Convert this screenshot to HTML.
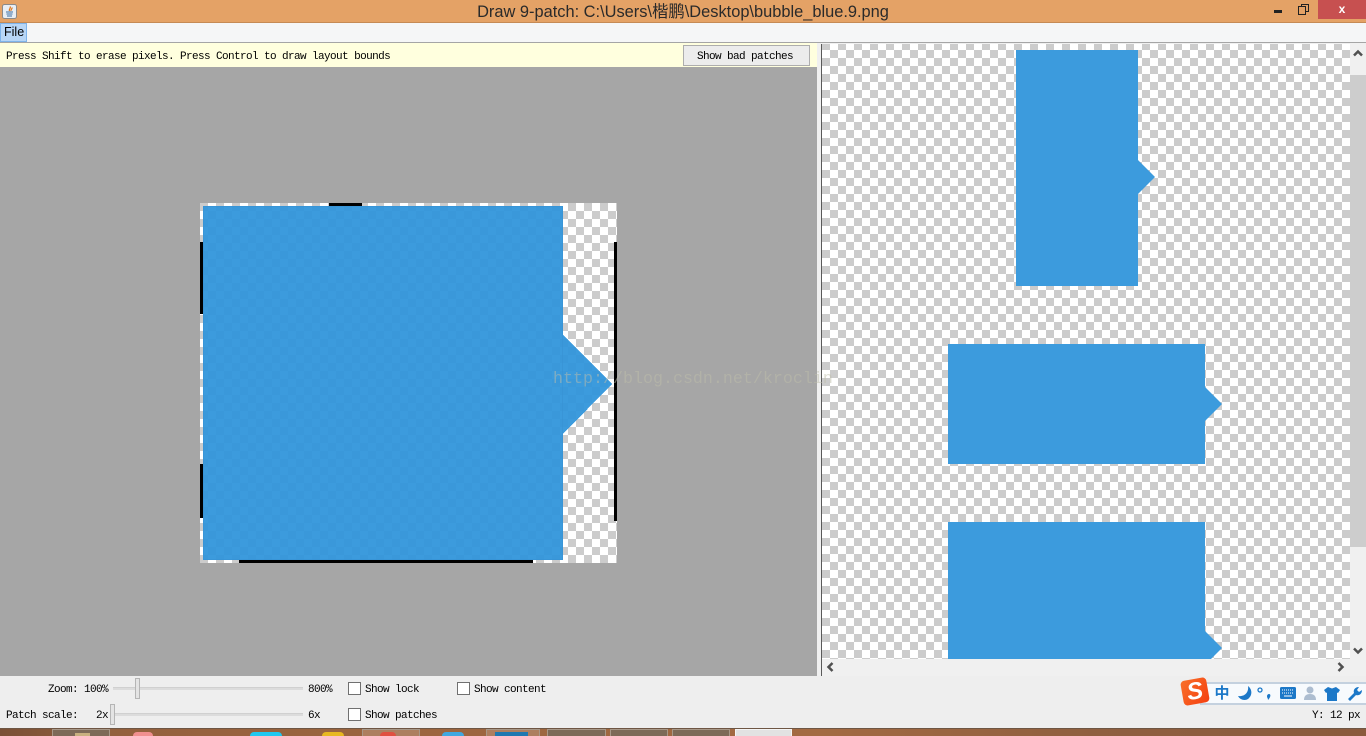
<!DOCTYPE html>
<html><head><meta charset="utf-8"><title>Draw 9-patch</title>
<style>
html,body{margin:0;padding:0;width:1366px;height:736px;overflow:hidden;background:#eee}
.a{position:absolute}
.m{position:absolute;font-family:"Liberation Mono",monospace;font-size:11px;letter-spacing:-.6px;color:#000;line-height:14px;white-space:pre}
.ch{position:absolute;width:11px;height:11px;background:#fff;border:1px solid #707070}
.track{position:absolute;left:113px;width:190px;height:3px;background:#dcdcdc;border-top:1px solid #d0d0d0;box-sizing:border-box}
.thumb{position:absolute;width:5px;height:21px;background:#e4e4e4;border:1px solid #b5b5b5;box-sizing:border-box}
.cb{background-color:#fff;background-image:conic-gradient(#fff 25%,#ccc 0 50%,#fff 0 75%,#ccc 0);background-size:16px 16px}
.tb{position:absolute;top:729px;height:7px;background:#7d6a58;border:1px solid #a89888;border-bottom:0;box-sizing:border-box}
</style></head>
<body>
<!-- title bar -->
<div class="a" style="left:0;top:0;width:1366px;height:22px;background:#e4a266"></div>
<div class="a" style="left:0;top:22px;width:1366px;height:1px;background:#c58a55"></div>
<svg class="a" style="left:2px;top:4px" width="16" height="15" viewBox="0 0 16 15">
<rect x=".5" y=".5" width="14" height="14" rx="2" fill="#e8eef4" stroke="#8a8a8a"/>
<path d="M8 2.500C9.500 4 6.500 5 7.500 7M10 3.500C10.500 5 8.500 5.500 9 7" stroke="#e0761a" fill="none" stroke-width="1.200"/>
<path d="M4 8h7M4.500 10h6M5 12h5" stroke="#3a6ea5" stroke-width="1"/>
</svg>
<div class="a" style="left:0;top:3px;width:1366px;text-align:center;font:16.4px/19px 'Liberation Sans','Noto Sans CJK SC',sans-serif;color:#2a2a2a;white-space:pre">Draw 9-patch: C:\Users\楷鹏\Desktop\bubble_blue.9.png</div>
<div class="a" style="left:1274px;top:10px;width:8px;height:3px;background:#222"></div>
<svg class="a" style="left:1298px;top:4px" width="11" height="11" viewBox="0 0 11 11"><path d="M3.500 2.500V.5h7v7H8M.5 2.500h7v8h-7z" fill="none" stroke="#222"/></svg>
<div class="a" style="left:1318px;top:0;width:48px;height:19px;background:#c75050"></div>
<div class="a" style="left:1318px;top:0;width:48px;height:19px;text-align:center;font:bold 12px/19px 'Liberation Sans',sans-serif;color:#fff">x</div>
<!-- menu -->
<div class="a" style="left:0;top:23px;width:1366px;height:19px;background:#f5f6f7"></div>
<div class="a" style="left:0;top:23px;width:27px;height:19px;box-sizing:border-box;background:#b8d6f6;border:1px solid #7fb4ea;font:12.500px/17px 'Liberation Sans',sans-serif;padding-left:3px;color:#000">File</div>
<div class="a" style="left:0;top:42px;width:1366px;height:1px;background:#a5a5a5"></div>
<div class="a" style="left:0;top:43px;width:1366px;height:1px;background:#f0f0f0"></div>
<!-- left pane -->
<div class="a" style="left:0;top:43px;width:817px;height:24px;background:#ffffde"></div>
<div class="m" style="left:6px;top:50px">Press Shift to erase pixels. Press Control to draw layout bounds</div>
<div class="a" style="left:683px;top:45px;width:127px;height:21px;box-sizing:border-box;background:#ececec;border:1px solid #adadad"></div>
<div class="m" style="left:697px;top:50px">Show bad patches</div>
<div class="a" style="left:0;top:67px;width:817px;height:609px;background:#a6a6a6"></div>
<!-- 9-patch image -->
<div class="a cb" style="left:200px;top:203px;width:417px;height:360px"></div>
<svg class="a" style="left:200px;top:203px" width="417" height="360" viewBox="0 0 417 360" shape-rendering="crispEdges">
<defs><pattern id="p" width="16" height="16" patternUnits="userSpaceOnUse"><rect width="16" height="16" fill="#3c9bdd"/><rect width="8" height="8" fill="#3a98da"/><rect x="8" y="8" width="8" height="8" fill="#3a98da"/></pattern></defs>
<path d="M3 3H363V132L412 181 363 231V357H3z" fill="url(#p)"/>
<rect x="3.500" y="3.500" width="359" height="353" fill="none" stroke="#3893d4" stroke-width="1" opacity=".7"/>
<rect x="129" y="0" width="33" height="3" fill="#000"/>
<rect x="0" y="39" width="3" height="72" fill="#000"/>
<rect x="0" y="261" width="3" height="54" fill="#000"/>
<rect x="414" y="39" width="3" height="279" fill="#000"/>
<rect x="39" y="357" width="294" height="3" fill="#000"/>
</svg>
<!-- divider -->
<div class="a" style="left:817px;top:43px;width:4px;height:633px;background:#f0f0f0"></div>
<div class="a" style="left:821px;top:44px;width:1px;height:632px;background:#5a5a5a"></div>
<!-- right pane -->
<div class="a cb" style="left:822px;top:44px;width:528px;height:615px;background-position:0 -2px"></div>
<svg class="a" style="left:822px;top:44px" width="528" height="615" viewBox="0 0 528 615">
<path d="M194 6H316V116L333 133 316 150V242H194z" fill="#3c9bdd"/>
<path d="M126 300H383V343L400 360 383 377V420H126z" fill="#3c9bdd"/>
<path d="M126 478H383V587L400 604 389 615H126z" fill="#3c9bdd"/>
</svg>
<!-- scrollbars -->
<div class="a" style="left:1350px;top:44px;width:16px;height:615px;background:#f0f0f0"></div>
<div class="a" style="left:1350px;top:75px;width:16px;height:472px;background:#cdcdcd"></div>
<svg class="a" style="left:1353px;top:48px" width="10" height="10"><path d="M1 7.500L5 3.500 9 7.500" fill="none" stroke="#505050" stroke-width="2.500"/></svg>
<svg class="a" style="left:1353px;top:646px" width="10" height="10"><path d="M1 2.500L5 6.500 9 2.500" fill="none" stroke="#505050" stroke-width="2.500"/></svg>
<div class="a" style="left:822px;top:659px;width:544px;height:17px;background:#f0f0f0"></div>
<svg class="a" style="left:825px;top:662px" width="10" height="10"><path d="M7.500 1L3.500 5 7.500 9" fill="none" stroke="#505050" stroke-width="2.500"/></svg>
<svg class="a" style="left:1336px;top:662px" width="10" height="10"><path d="M2.500 1L6.500 5 2.500 9" fill="none" stroke="#505050" stroke-width="2.500"/></svg>
<!-- bottom panel -->
<div class="a" style="left:0;top:676px;width:1366px;height:52px;background:#eee"></div>
<div class="m" style="left:48px;top:683px">Zoom: 100%</div>
<div class="track" style="top:687px"></div>
<div class="thumb" style="left:135px;top:678px"></div>
<div class="m" style="left:308px;top:683px">800%</div>
<div class="ch" style="left:348px;top:682px"></div>
<div class="m" style="left:365px;top:683px">Show lock</div>
<div class="ch" style="left:457px;top:682px"></div>
<div class="m" style="left:474px;top:683px">Show content</div>
<div class="m" style="left:6px;top:709px">Patch scale:</div>
<div class="m" style="left:96px;top:709px">2x</div>
<div class="track" style="top:713px"></div>
<div class="thumb" style="left:110px;top:704px"></div>
<div class="m" style="left:308px;top:709px">6x</div>
<div class="ch" style="left:348px;top:708px"></div>
<div class="m" style="left:365px;top:709px">Show patches</div>
<div class="m" style="left:1312px;top:709px">Y: 12 px</div>
<!-- sogou toolbar -->
<div class="a" style="left:1200px;top:682px;width:166px;height:23px;box-sizing:border-box;background:#f7fafd;border:2px solid #c4d1df;border-right:0"></div>
<div class="a" style="left:1182px;top:679px;width:26px;height:25px;border-radius:4px;background:linear-gradient(135deg,#f9702a,#f43f10);transform:rotate(-10deg);text-align:center;font:italic bold 24px/25px 'Liberation Sans',sans-serif;color:#fff">S</div>
<div class="a" style="left:1214px;top:684px;width:16px;text-align:center;font:bold 15px/18px 'Noto Sans CJK SC',sans-serif;color:#1c78c8">中</div>
<svg class="a" style="left:1236px;top:685px" width="130" height="18" viewBox="0 0 130 18">
<path d="M12 1C13 7 9 12 2 11 4 15 9 16 12 14 17 10 16 4 12 1z" fill="#1c78c8"/>
<circle cx="24" cy="5" r="2" fill="none" stroke="#1c78c8" stroke-width="1.300"/>
<path d="M33 9c2 0 2 3-1 6 0-2-1-2-1-4 0-1 1-2 2-2z" fill="#1c78c8"/>
<rect x="44" y="2" width="16" height="12" rx="1.500" fill="#1c78c8"/>
<path d="M46 5h12M46 8h12" stroke="#fff" stroke-dasharray="1 1"/><path d="M48 11h8" stroke="#fff"/>
<circle cx="74" cy="5" r="3.500" fill="#adbdd0"/><path d="M68 15c0-4 2-6 6-6s6 2 6 6z" fill="#adbdd0"/>
<path d="M92 2l4 1.500L100 2l4 3-2 3-1-.500V16H91V7.500L90 8l-2-3z" fill="#1c78c8"/>
<path d="M114 16l-2-2 6-6c-1-3 1-6 5-6l-2 3 2 2 3-2c0 4-3 6-6 5z" fill="#1c78c8"/>
</svg>
<!-- taskbar -->
<div class="a" style="left:0;top:728px;width:1366px;height:8px;background:linear-gradient(90deg,#7a5036 0,#93603d 8%,#9c653f 30%,#a36a42 60%,#8f5f40 80%,#8a5a3c 100%)"></div>
<div class="a" style="left:0;top:728px;width:1366px;height:1px;background:#6e5644"></div>
<div class="tb" style="left:52px;width:58px"></div>
<div class="tb" style="left:362px;width:58px;background:#ad7f60"></div>
<div class="tb" style="left:486px;width:54px;background:#ad7f60"></div>
<div class="tb" style="left:547px;width:59px"></div>
<div class="tb" style="left:610px;width:58px"></div>
<div class="tb" style="left:672px;width:58px"></div>
<div class="tb" style="left:735px;width:57px;background:#e2e2e2;border-color:#f4f4f4"></div>
<div class="a" style="left:133px;top:732px;width:20px;height:4px;border-radius:10px 10px 0 0;background:#f08f8f"></div>
<div class="a" style="left:250px;top:732px;width:32px;height:4px;border-radius:6px 6px 0 0;background:#20c8f0"></div>
<div class="a" style="left:322px;top:732px;width:22px;height:4px;border-radius:10px 10px 0 0;background:#e8b820"></div>
<div class="a" style="left:380px;top:732px;width:16px;height:4px;border-radius:8px 8px 0 0;background:#e05040"></div>
<div class="a" style="left:442px;top:732px;width:22px;height:4px;border-radius:10px 10px 0 0;background:#40a8e0"></div>
<div class="a" style="left:495px;top:732px;width:33px;height:4px;background:#1f78b0"></div>
<div class="a" style="left:75px;top:733px;width:15px;height:3px;background:#c8b080"></div>
<!-- watermark -->
<div class="a" style="left:553px;top:370px;font-family:'Liberation Mono',monospace;font-size:16.67px;line-height:20px;color:rgba(190,190,170,.5);white-space:pre">http://blog.csdn.net/kroclin</div>
</body></html>
